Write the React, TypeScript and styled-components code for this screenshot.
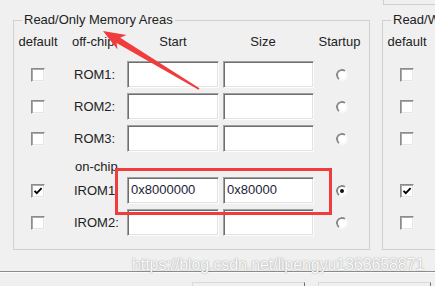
import React from "react";
import styled, { createGlobalStyle } from "styled-components";

const GlobalStyle = createGlobalStyle`
  html, body {
    margin: 0;
    padding: 0;
    background: #f0f0f0;
  }
  body {
    font-family: "Liberation Sans", Arial, sans-serif;
    font-size: 13px;
    color: #222;
  }
`;

const Screen = styled.div`
  position: relative;
  width: 435px;
  height: 286px;
  overflow: hidden;
  background: #f0f0f0;
  display: flex;
  flex-direction: column;
`;

const TopStrip = styled.div`
  flex: none;
  height: 20px;
  display: flex;
  padding-left: 383px;
  box-sizing: border-box;
`;

const TopPanel = styled.div`
  width: 60px;
  height: 5px;
  box-sizing: border-box;
  border-left: 1px solid #cfcfcf;
  border-bottom: 1px solid #cfcfcf;
`;

const GroupRow = styled.div`
  flex: none;
  display: flex;
  gap: 12px;
  padding-left: 13px;
`;

const Group = styled.div`
  position: relative;
  flex: none;
  width: 357px;
  height: 230px;
  box-sizing: border-box;
  border: 1px solid #d0d0d0;
`;

const Caption = styled.span`
  position: absolute;
  top: -9px;
  left: 8px;
  padding: 0 2px;
  background: #f0f0f0;
  line-height: 16px;
  white-space: nowrap;
`;

const Grid = styled.div`
  display: grid;
  grid-template-columns: 48px 65px 96px 91px 1fr;
  grid-template-rows: 27px 32px 32px 32px 20px 32px 32px;
  padding-top: 13px;
`;

const HeadCell = styled.div<{ $pad?: number; $center?: boolean }>`
  line-height: 16px;
  white-space: nowrap;
  text-align: ${(p) => (p.$center ? "center" : "left")};
  padding-left: ${(p) => (p.$center ? 0 : p.$pad ?? 0)}px;
  padding-right: ${(p) => (p.$center ? p.$pad ?? 0 : 0)}px;
`;

const RowLabel = styled.div`
  line-height: 27px;
  padding-left: 12px;
  white-space: nowrap;
`;

const SectionLabel = styled.div`
  grid-column: 2 / span 4;
  line-height: 20px;
  padding-left: 13px;
`;

const CheckBox = styled.div`
  justify-self: center;
  align-self: start;
  margin-top: 7px;
  width: 14px;
  height: 14px;
  box-sizing: border-box;
  background: #fff;
  border: 1px solid;
  border-color: #8c8c8c #f4f4f4 #f4f4f4 #8c8c8c;
  box-shadow: inset 1px 1px 0 #a8a8a8, inset -1px -1px 0 #e6e6e6;
  display: flex;
  align-items: center;
  justify-content: center;
`;

const Edit = styled.div<{ $w: number }>`
  width: ${(p) => p.$w}px;
  height: 27px;
  box-sizing: border-box;
  background: #fff;
  border: 1px solid;
  border-color: #a0a0a0 #fdfdfd #fdfdfd #a0a0a0;
  box-shadow: inset 1px 1px 0 #6e6e6e, inset -1px -1px 0 #e3e3e3;
  padding-left: 3px;
  line-height: 24px;
  color: #1c1c38;
  white-space: nowrap;
  overflow: hidden;
`;

const Radio = styled.div`
  justify-self: center;
  align-self: start;
  margin-top: 8px;
  width: 12px;
  height: 12px;
  box-sizing: border-box;
  border-radius: 50%;
  border: 2px solid;
  border-color: #8a8a8a #f8f8f8 #f8f8f8 #8a8a8a;
  transform: rotate(-8deg);
  background: #fff;
  display: flex;
  align-items: center;
  justify-content: center;
`;

const Dot = styled.div`
  width: 4px;
  height: 4px;
  border-radius: 50%;
  background: #111;
`;

const Separator = styled.div`
  flex: none;
  margin-top: 21px;
  height: 2px;
  box-sizing: border-box;
  border-top: 1px solid #8c8c8c;
  border-bottom: 1px solid #fcfcfc;
`;

const ButtonRow = styled.div`
  flex: none;
  margin-top: 9px;
  display: flex;
  gap: 13px;
  padding-left: 192px;
`;

const DlgButton = styled.div`
  flex: none;
  width: 113px;
  height: 26px;
  box-sizing: border-box;
  border: 1px solid;
  border-color: #dadada #6e6e6e #6e6e6e #dadada;
  background: #f0f0f0;
`;

const Watermark = styled.div`
  position: absolute;
  left: 132px;
  top: 256px;
  font-family: "Liberation Sans", Arial, sans-serif;
  font-size: 16px;
  line-height: 18px;
  letter-spacing: -0.1px;
  color: #fcfcfc;
  text-shadow: 0 0 1px rgba(120, 120, 120, 0.7), 0 0 2px rgba(160, 160, 160, 0.5);
  white-space: nowrap;
  pointer-events: none;
`;

const Highlight = styled.div`
  position: absolute;
  left: 115px;
  top: 168px;
  width: 217px;
  height: 47px;
  box-sizing: border-box;
  border: 3px solid #f03c3c;
  pointer-events: none;
`;

const ArrowLayer = styled.svg`
  position: absolute;
  left: 0;
  top: 0;
  pointer-events: none;
`;

type MemRow = { name: string; section?: string; checked?: boolean; start?: string; size?: string; startup?: boolean };

const romRows: MemRow[] = [
  { name: "ROM1:" },
  { name: "ROM2:" },
  { name: "ROM3:" },
  { name: "IROM1:", section: "on-chip", checked: true, start: "0x8000000", size: "0x80000", startup: true },
  { name: "IROM2:" },
];

const ramRows: MemRow[] = [
  { name: "RAM1:" },
  { name: "RAM2:" },
  { name: "RAM3:" },
  { name: "IRAM1:", section: "on-chip", checked: true, start: "0x20000000", size: "0x5000" },
  { name: "IRAM2:" },
];

function Check() {
  return (
    <svg width="10" height="10" viewBox="0 0 10 10">
      <path d="M1.5 4.8 L3.8 7.2 L8.6 2.2" fill="none" stroke="#000" strokeWidth="1.9" />
    </svg>
  );
}

function MemoryGroup({ title, rows, showStartup }: { title: string; rows: MemRow[]; showStartup: boolean }) {
  return (
    <Group>
      <Caption>{title}</Caption>
      <Grid>
        <HeadCell $center>default</HeadCell>
        <HeadCell $pad={10}>off-chip</HeadCell>
        <HeadCell $center $pad={4}>Start</HeadCell>
        <HeadCell $center $pad={11}>Size</HeadCell>
        <HeadCell $center $pad={4}>{showStartup ? "Startup" : "NoInit"}</HeadCell>
        {rows.map((r) => (
          <React.Fragment key={r.name}>
            {r.section && <><div /><SectionLabel>{r.section}</SectionLabel></>}
            <CheckBox>{r.checked && <Check />}</CheckBox>
            <RowLabel>{r.name}</RowLabel>
            <Edit $w={92}>{r.start}</Edit>
            <Edit $w={91}>{r.size}</Edit>
            {showStartup ? <Radio>{r.startup && <Dot />}</Radio> : <CheckBox />}
          </React.Fragment>
        ))}
      </Grid>
    </Group>
  );
}

export default function App() {
  return (
    <>
      <GlobalStyle />
      <Screen>
        <TopStrip>
          <TopPanel />
        </TopStrip>
        <GroupRow>
          <MemoryGroup title="Read/Only Memory Areas" rows={romRows} showStartup />
          <MemoryGroup title="Read/Write Memory Areas" rows={ramRows} showStartup={false} />
        </GroupRow>
        <Separator />
        <ButtonRow>
          <DlgButton />
          <DlgButton />
        </ButtonRow>
        <Highlight />
        <ArrowLayer width="435" height="286" viewBox="0 0 435 286">
          <polygon
            points="103,31 126.5,35 120.2,37.8 199.5,88.3 198.5,89.7 116.6,43 117.5,49.6"
            fill="#f03c3c"
          />
        </ArrowLayer>
        <Watermark>https://blog.csdn.net/lipengyu1363658871</Watermark>
      </Screen>
    </>
  );
}
